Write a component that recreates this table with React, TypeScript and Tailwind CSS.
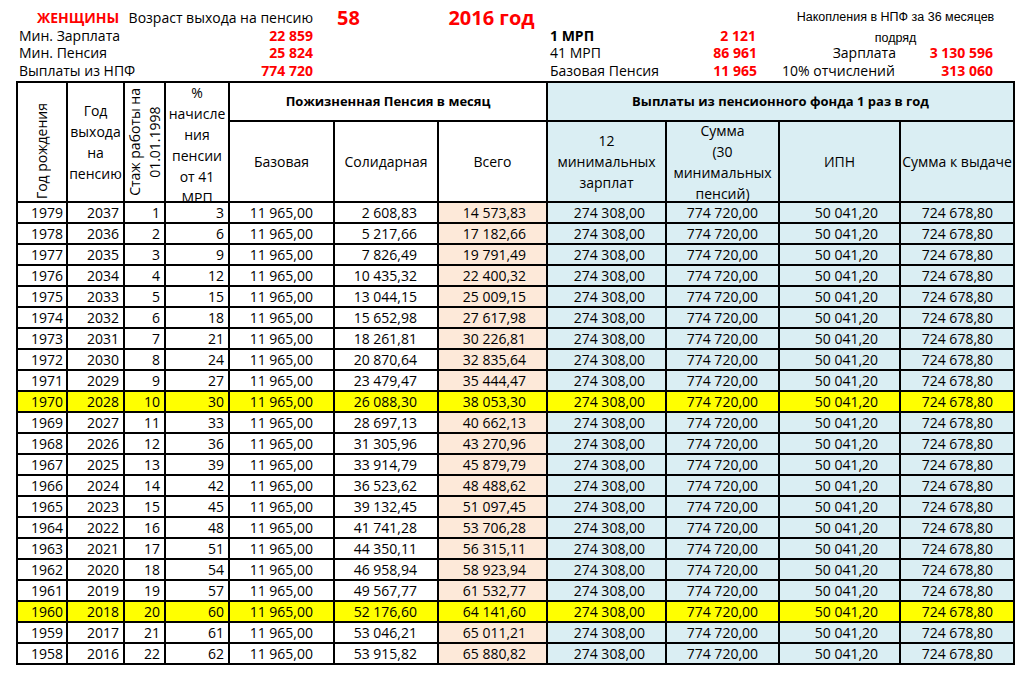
import React from "react";

const colWidths = [50, 57, 41, 64, 105, 104, 109, 119, 113, 121, 114];

// суммы в копейках
const BASE = 1196500;
const MRP41 = 86961;

const fmt = (cents: number) => {
  const int = Math.floor(cents / 100);
  const frac = cents % 100;
  return int.toString().replace(/\B(?=(\d{3})+(?!\d))/g, " ") + "," + frac.toString().padStart(2, "0");
};

const rows = Array.from({ length: 22 }, (_, i) => {
  const stazh = i + 1;
  const pct = stazh <= 20 ? stazh * 3 : 60 + (stazh - 20);
  const sol = MRP41 * pct;
  return {
    birth: 1979 - i,
    retire: 2037 - i,
    stazh,
    pct,
    base: fmt(BASE),
    sol: fmt(sol),
    total: fmt(BASE + sol),
    hl: 1979 - i === 1970 || 1979 - i === 1960,
  };
});

const cell = "border-2 border-black p-0 h-[21px] leading-none whitespace-nowrap text-right";

function TopInfo() {
  return (
    <div className="ml-[16px] w-[997px] pt-[9px] grid grid-cols-[50px_57px_41px_64px_105px_104px_109px_119px_113px_121px_114px] grid-rows-[18px_17px_18px_18px] leading-[18px] whitespace-nowrap">
      <div className="col-start-1 col-span-2 row-start-1 pl-[21px] font-bold text-[#ff0000]">ЖЕНЩИНЫ</div>
      <div className="col-start-3 col-span-3 row-start-1 text-right pr-[20px]">Возраст выхода на пенсию</div>
      <div className="col-start-6 row-start-1 pl-[4px] text-[20px] font-bold text-[#ff0000]">58</div>
      <div className="col-start-7 row-start-1 text-center text-[20px] font-bold text-[#ff0000]">2016 год</div>
      <div className="col-start-10 col-span-2 row-start-1 row-span-2 -mt-[2px] self-start text-center font-['Liberation_Sans',Arial,sans-serif] text-[12.5px] leading-[21px] whitespace-normal px-[14px]">
        Накопления в НПФ за 36 месяцев подряд
      </div>

      <div className="col-start-1 col-span-4 row-start-2 pl-[3px]">Мин. Зарплата</div>
      <div className="col-start-5 row-start-2 text-right pr-[20px] font-bold text-[#ff0000]">22 859</div>
      <div className="col-start-8 row-start-2 pl-[4px] font-bold">1 МРП</div>
      <div className="col-start-9 row-start-2 text-right pr-[22px] font-bold text-[#ff0000]">2 121</div>

      <div className="col-start-1 col-span-4 row-start-3 pl-[3px]">Мин. Пенсия</div>
      <div className="col-start-5 row-start-3 text-right pr-[20px] font-bold text-[#ff0000]">25 824</div>
      <div className="col-start-8 row-start-3 pl-[4px]">41 МРП</div>
      <div className="col-start-9 row-start-3 text-right pr-[21px] font-bold text-[#ff0000]">86 961</div>
      <div className="col-start-10 row-start-3 text-right pr-[3px]">Зарплата</div>
      <div className="col-start-11 row-start-3 text-right pr-[20px] font-bold text-[#ff0000]">3 130 596</div>

      <div className="col-start-1 col-span-4 row-start-4 pl-[3px]">Выплаты из НПФ</div>
      <div className="col-start-5 row-start-4 text-right pr-[20px] font-bold text-[#ff0000]">774 720</div>
      <div className="col-start-8 row-start-4 pl-[4px]">Базовая Пенсия</div>
      <div className="col-start-9 row-start-4 text-right pr-[21px] font-bold text-[#ff0000]">11 965</div>
      <div className="col-start-10 row-start-4 pl-[4px]">10% отчислений</div>
      <div className="col-start-11 row-start-4 text-right pr-[20px] font-bold text-[#ff0000]">313 060</div>
    </div>
  );
}

function HeadCell({ children, className = "" }: { children: React.ReactNode; className?: string }) {
  return (
    <th className={"border-2 border-black p-0 font-normal " + className}>
      <div className="h-[79px] flex flex-col justify-center overflow-hidden text-center leading-[21px]">{children}</div>
    </th>
  );
}

export default function App() {
  return (
    <div className="w-[1022px] h-[675px] bg-white text-black font-['Open_Sans',sans-serif] text-[14px] overflow-hidden">
      <TopInfo />
      <table className="mt-[1px] ml-[16px] w-[997px] table-fixed border-collapse">
        <colgroup>
          {colWidths.map((w, i) => (
            <col key={i} style={{ width: w }} />
          ))}
        </colgroup>
        <thead>
          <tr className="h-[39px]">
            <th rowSpan={2} className="border-2 border-black p-0 font-normal">
              <div className="h-[118px] flex items-end justify-center pb-[2px] overflow-hidden">
                <div className="[writing-mode:vertical-rl] rotate-180 leading-[20px] whitespace-nowrap">Год рождения</div>
              </div>
            </th>
            <th rowSpan={2} className="border-2 border-black p-0 font-normal">
              <div className="h-[118px] flex flex-col justify-center text-center leading-[21px]">
                Год<br />выхода<br />на<br />пенсию
              </div>
            </th>
            <th rowSpan={2} className="border-2 border-black p-0 font-normal">
              <div className="h-[118px] flex items-center justify-center overflow-hidden">
                <div className="[writing-mode:vertical-rl] rotate-180 text-center leading-[20px] whitespace-nowrap">
                  Стаж работы на<br />01.01.1998
                </div>
              </div>
            </th>
            <th rowSpan={2} className="border-2 border-black p-0 font-normal">
              <div className="h-[118px] flex flex-col justify-center overflow-hidden text-center leading-[21px]">
                <div className="pt-[6px]">%<br />начисле<br />ния<br />пенсии<br />от 41<br />МРП</div>
              </div>
            </th>
            <th colSpan={3} className="border-2 border-black p-0 text-[13px] font-bold">
              Пожизненная Пенсия в месяц
            </th>
            <th colSpan={4} className="border-2 border-black p-0 text-[13px] font-bold bg-[#daeef3]">
              Выплаты из пенсионного фонда 1 раз в год
            </th>
          </tr>
          <tr className="h-[81px]">
            <HeadCell>Базовая</HeadCell>
            <HeadCell>Солидарная</HeadCell>
            <HeadCell>Всего</HeadCell>
            <HeadCell className="bg-[#daeef3]">
              12<br />минимальных<br />зарплат
            </HeadCell>
            <HeadCell className="bg-[#daeef3]">
              Сумма<br />(30<br />минимальных<br />пенсий)
            </HeadCell>
            <HeadCell className="bg-[#daeef3]">ИПН</HeadCell>
            <HeadCell className="bg-[#daeef3]">
              <span className="whitespace-nowrap">Сумма к выдаче</span>
            </HeadCell>
          </tr>
        </thead>
        <tbody>
          {rows.map((r) => {
            const plain = r.hl ? "bg-[#ffff00]" : "bg-white";
            const peach = r.hl ? "bg-[#ffff00]" : "bg-[#fde9d9]";
            const blue = r.hl ? "bg-[#ffff00]" : "bg-[#daeef3]";
            return (
              <tr key={r.birth}>
                <td className={`${cell} ${plain} pr-[3px]`}>{r.birth}</td>
                <td className={`${cell} ${plain} pr-[4px]`}>{r.retire}</td>
                <td className={`${cell} ${plain} pr-[4px]`}>{r.stazh}</td>
                <td className={`${cell} ${plain} pr-[4px]`}>{r.pct}</td>
                <td className={`${cell} ${plain} pr-[20px]`}>{r.base}</td>
                <td className={`${cell} ${plain} pr-[20px]`}>{r.sol}</td>
                <td className={`${cell} ${peach} pr-[20px]`}>{r.total}</td>
                <td className={`${cell} ${blue} pr-[20px]`}>274 308,00</td>
                <td className={`${cell} ${blue} pr-[20px]`}>774 720,00</td>
                <td className={`${cell} ${blue} pr-[21px]`}>50 041,20</td>
                <td className={`${cell} ${blue} pr-[20px]`}>724 678,80</td>
              </tr>
            );
          })}
        </tbody>
      </table>
    </div>
  );
}
